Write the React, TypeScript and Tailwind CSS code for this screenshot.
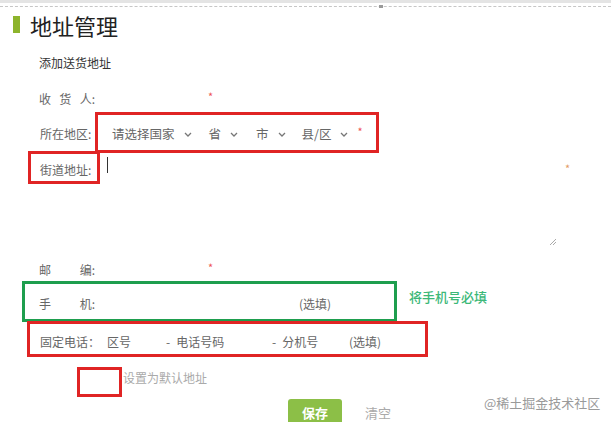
import React from "react";

function Chevron() {
  return (
    <svg width="8" height="5" viewBox="0 0 8 5" className="ml-[9px]">
      <polyline points="1,1 4,4 7,1" fill="none" stroke="#777" strokeWidth="1.3" />
    </svg>
  );
}

function Star({ className = "" }: { className?: string }) {
  return <span className={"text-[11px] leading-none -translate-y-[3px] " + className}>*</span>;
}

function Spaced({ parts }: { parts: string[] }) {
  return (
    <div className="w-[67px] shrink-0">
      <div className="w-[56px] flex justify-between">
        {parts.map((p) => (
          <span key={p}>{p}</span>
        ))}
      </div>
    </div>
  );
}

export default function App() {
  return (
    <div className="relative w-[611px] h-[422px] overflow-hidden bg-white font-['Noto_Sans_CJK_SC','Microsoft_YaHei',sans-serif] text-[12px] leading-[14px] text-[#666]">
      <div className="h-[3px] bg-[#e4e4e4]" />
      <div className="relative mt-[3px] border-t border-dashed border-[#c6c6c6]">
        <div className="absolute left-[379px] -top-[2px] w-[4px] h-[3px] bg-[#9a9a9a]" />
      </div>

      {/* title */}
      <div className="h-[35px] flex items-center pl-[13px]">
        <div className="w-[7px] h-[17px] bg-[#8db42c]" />
        <h1 className="ml-[10px] text-[22px] leading-none text-[#222]">地址管理</h1>
      </div>

      <div className="h-[42px] flex items-center pl-[39px] text-[#333]">添加送货地址</div>

      <div className="h-[30px] flex items-center pl-[39px]">
        <Spaced parts={["收", "货", "人:"]} />
        <div className="w-[102px]" />
        <Star className="text-[#e55]" />
      </div>

      <div className="h-[40px] flex items-center pl-[40px] text-[12.5px]">
        <div className="w-[72px] shrink-0 text-[12px]">所在地区:</div>
        <span>请选择国家</span>
        <Chevron />
        <span className="ml-[17px]">省</span>
        <Chevron />
        <span className="ml-[18px]">市</span>
        <Chevron />
        <span className="ml-[16px]">县/区</span>
        <Chevron />
        <Star className="ml-[9px] text-[#e55]" />
      </div>

      <div className="h-[96px] flex items-start pl-[40px]">
        <div className="w-[67px] shrink-0 mt-[9px]">街道地址:</div>
        <div className="relative w-[450px] h-[92px]">
          <div className="mt-[3px] w-px h-[16px] bg-[#333]" />
          <svg width="8" height="8" viewBox="0 0 8 8" className="absolute right-[0px] bottom-[0px]">
            <line x1="7" y1="1" x2="1" y2="7" stroke="#aaa" strokeWidth="1" />
            <line x1="7" y1="4" x2="4" y2="7" stroke="#aaa" strokeWidth="1" />
          </svg>
        </div>
        <span className="ml-[8px] mt-[9px] text-[11px] leading-none text-[#e39a66]">*</span>
      </div>

      <div className="h-[40px] flex items-center pl-[39px]">
        <Spaced parts={["邮", "编:"]} />
        <div className="w-[102px]" />
        <Star className="text-[#e55]" />
      </div>

      <div className="h-[28px] flex items-center pl-[39px]">
        <Spaced parts={["手", "机:"]} />
        <div className="w-[193px]" />
        <span>(选填)</span>
      </div>

      <div className="h-[48px] flex items-center pl-[40px]">
        <div className="w-[67px] shrink-0">固定电话：</div>
        <span className="w-[59px]">区号</span>
        <span className="w-[106px]">
          -<span className="ml-[6px]">电话号码</span>
        </span>
        <span className="w-[77px]">
          -<span className="ml-[6px]">分机号</span>
        </span>
        <span>(选填)</span>
      </div>

      <div className="h-[24px] flex items-center pl-[123px] text-[#aaa]">设置为默认地址</div>

      <div className="h-[46px] flex items-center pl-[288px] text-[13px]">
        <button className="w-[54px] h-[28px] rounded-[3px] bg-[#8cbf47] text-white font-bold">保存</button>
        <span className="ml-[23px] text-[#aaa]">清空</span>
      </div>

      {/* annotations */}
      <div className="absolute left-[22px] top-[281px] w-[375px] h-[41px] border-[3px] border-[#1e9e4e]" />
      <div className="absolute left-[95px] top-[112px] w-[284px] h-[41px] border-[3px] border-[#e02424]" />
      <div className="absolute left-[28px] top-[151px] w-[72px] h-[33px] border-[3px] border-[#e02424]" />
      <div className="absolute left-[27px] top-[321px] w-[401px] h-[36px] border-[3px] border-[#e02424]" />
      <div className="absolute left-[77px] top-[367px] w-[45px] h-[30px] border-[3px] border-[#e02424]" />
      <div className="absolute left-[409px] top-[289px] text-[13px] leading-[16px] font-medium text-[#3cb878]">将手机号必填</div>
      <div className="absolute left-[484px] top-[395px] text-[13px] leading-[16px] text-[#9a9a9a]">@稀土掘金技术社区</div>
    </div>
  );
}
